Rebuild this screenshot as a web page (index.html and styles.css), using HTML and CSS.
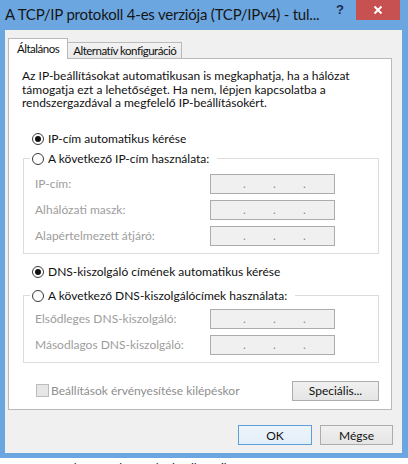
FILE: index.html
```html
<!DOCTYPE html>
<html lang="hu">
<head>
<meta charset="utf-8">
<title>TCP/IPv4</title>
<link rel="stylesheet" href="styles.css">
</head>
<body>
<div class="window">
  <div class="titlebar">
    <span class="title">A TCP/IP protokoll 4-es verziója (TCP/IPv4) - tul...</span>
    <span class="help">?</span>
    <span class="close"><svg width="10" height="10" viewBox="0 0 10 10"><path d="M1.5 1.5 L8.5 8.5 M8.5 1.5 L1.5 8.5" stroke="#fff" stroke-width="2" fill="none"/></svg></span>
  </div>
  <div class="client">
    <div class="tabs">
      <div class="tab active">Általános</div>
      <div class="tab">Alternatív konfiguráció</div>
    </div>
    <div class="panel">
      <p class="intro">Az IP-beállításokat automatikusan is megkaphatja, ha a hálózat támogatja ezt a lehetőséget. Ha nem, lépjen kapcsolatba a rendszergazdával a megfelelő IP-beállításokért.</p>

      <div class="option first"><span class="radio checked"></span>IP-cím automatikus kérése</div>
      <fieldset class="group ipgroup">
        <legend class="option"><span class="radio"></span>A következő IP-cím használata:</legend>
        <div class="fields">
          <span class="lbl">IP-cím:</span><span class="ipbox"><i></i><b>.</b><i></i><b>.</b><i></i><b>.</b><i></i></span>
          <span class="lbl">Alhálózati maszk:</span><span class="ipbox"><i></i><b>.</b><i></i><b>.</b><i></i><b>.</b><i></i></span>
          <span class="lbl">Alapértelmezett átjáró:</span><span class="ipbox"><i></i><b>.</b><i></i><b>.</b><i></i><b>.</b><i></i></span>
        </div>
      </fieldset>

      <div class="option dnsauto"><span class="radio checked"></span>DNS-kiszolgáló címének automatikus kérése</div>
      <fieldset class="group dnsgroup">
        <legend class="option"><span class="radio"></span>A következő DNS-kiszolgálócímek használata:</legend>
        <div class="fields">
          <span class="lbl">Elsődleges DNS-kiszolgáló:</span><span class="ipbox"><i></i><b>.</b><i></i><b>.</b><i></i><b>.</b><i></i></span>
          <span class="lbl">Másodlagos DNS-kiszolgáló:</span><span class="ipbox"><i></i><b>.</b><i></i><b>.</b><i></i><b>.</b><i></i></span>
        </div>
      </fieldset>

      <div class="bottomrow">
        <span class="check"><span class="box"></span>Beállítások érvényesítése kilépéskor</span>
        <span class="btn special">Speciális...</span>
      </div>
    </div>
    <div class="footer">
      <span class="btn ok">OK</span>
      <span class="btn">Mégse</span>
    </div>
  </div>
</div>
<div class="under"><span>Az összetevő leírása a kapcsolat beállításaihoz</span></div>
</body>
</html>
```
FILE: styles.css
```css
* { box-sizing: border-box; }
html, body { margin: 0; padding: 0; background: #ffffff; }
body {
  width: 408px;
  height: 464px;
  overflow: hidden;
  font-family: Lato, "Liberation Sans", sans-serif;
  font-size: 12px;
  color: #111;
}
.window {
  width: 408px;
  background: #6ca6e0;
  padding: 0 6px 5px 5px;
}
.titlebar {
  height: 30px;
  display: flex;
  align-items: flex-start;
}
.title {
  flex: 1;
  min-width: 0;
  font-size: 15px;
  letter-spacing: -0.2px;
  line-height: 28px;
  color: #161616;
  white-space: nowrap;
}
.help {
  width: 16px;
  text-align: center;
  font-family: "Liberation Sans", sans-serif;
  font-weight: bold;
  font-size: 13px;
  line-height: 20px;
  color: #1c2c4c;
  margin-right: 8px;
}
.close {
  width: 44px;
  height: 20px;
  margin-right: 2px;
  background: #c75050;
  display: flex;
  align-items: center;
  justify-content: center;
}
.client {
  height: 423px;
  background: #f0f0f0;
  padding: 8px 9px 0 3px;
}
.tabs {
  display: flex;
  align-items: flex-end;
  height: 20px;
}
.tab {
  height: 16px;
  padding: 0 5px;
  border: 1px solid #b9b9b9;
  border-bottom: none;
  border-left: none;
  background: linear-gradient(#f3f3f3, #e9e9e9);
  font-size: 11.5px;
  letter-spacing: -0.5px;
  line-height: 15px;
  white-space: nowrap;
}
.tab.active {
  position: relative;
  z-index: 1;
  height: 21px;
  margin-bottom: -1px;
  padding: 0 8px;
  border-left: 1px solid #b9b9b9;
  background: #ffffff;
  line-height: 20px;
}
.panel {
  width: 384px;
  height: 352px;
  margin-right: 1px;
  border: 1px solid #b9b9b9;
  background: #ffffff;
}
.intro {
  margin: 0;
  padding: 10px 13px 0 13px;
  line-height: 13.5px;
}
.option {
  display: flex;
  align-items: center;
  height: 16px;
  line-height: 16px;
  white-space: nowrap;
}
.first { margin: 21px 0 0 23px; }
.dnsauto { margin: 10px 0 0 23px; }
.radio {
  width: 12px;
  height: 12px;
  border: 1px solid #3a3a3a;
  border-radius: 50%;
  background: #fff;
  margin-right: 4px;
  display: flex;
  align-items: center;
  justify-content: center;
  flex: none;
}
.radio.checked::after {
  content: "";
  width: 6px;
  height: 6px;
  border-radius: 50%;
  background: #111;
}
.group {
  margin: 4px 12px 0 14px;
  border: 1px solid #dcdcdc;
  padding: 7px 0 7px 6px;
  min-width: 0;
}
.group legend {
  padding: 0 8px 0 2px;
}
.dnsgroup { margin-top: 8px; padding-top: 5px; }
.fields {
  display: grid;
  grid-template-columns: 175px 125px;
  row-gap: 6px;
  padding-left: 5px;
  align-items: center;
}
.lbl { color: #9d9d9d; }
.ipbox {
  height: 20px;
  border: 1px solid #acacac;
  background: #f0f0f0;
  display: grid;
  grid-template-columns: 29px 3px 27px 3px 27px 3px 1fr;
  padding-left: 3px;
  line-height: 18px;
  color: #8a8a8a;
}
.ipbox b { font-weight: normal; }
.bottomrow {
  margin: 18px 12px 0 27px;
  display: flex;
  align-items: center;
  justify-content: space-between;
  height: 20px;
}
.check {
  display: flex;
  align-items: center;
  color: #8e8e8e;
}
.box {
  width: 13px;
  height: 13px;
  border: 1px solid #bcbcbc;
  background: #e6e6e6;
  margin-right: 2px;
}
.btn {
  display: flex;
  align-items: center;
  justify-content: center;
  height: 20px;
  border: 1px solid #acacac;
  background: linear-gradient(#f0f0f0, #e5e5e5);
  color: #111;
}
.special { width: 87px; }
.footer {
  display: flex;
  justify-content: flex-end;
  gap: 8px;
  margin-top: 15px;
}
.footer .btn { width: 73px; }
.footer .btn.ok {
  width: 74px;
  border-color: #5d9fd8;
  background: linear-gradient(#eef5fb, #e2eef9);
}
.under {
  height: 6px;
  overflow: hidden;
  background: #ffffff;
  padding-left: 2px;
  line-height: 19px;
  color: #111;
  white-space: nowrap;
}
```
